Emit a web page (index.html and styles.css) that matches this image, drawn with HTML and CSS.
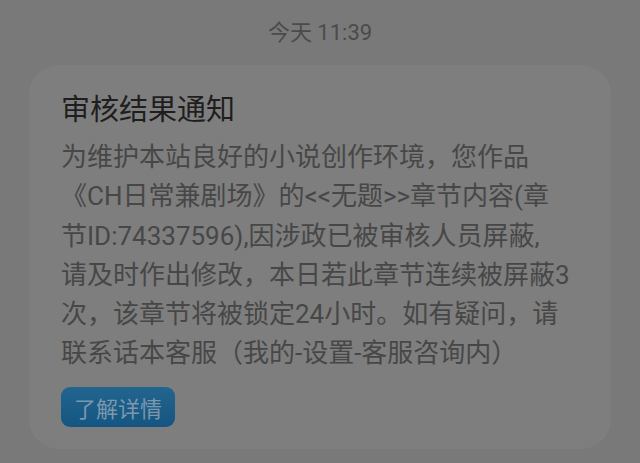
FILE: index.html
```html
<!DOCTYPE html>
<html>
<head>
    <title>审核结果通知</title>
    <link rel="stylesheet" href="styles.css">
</head>
<body>
    <div class="time">今天 11:39</div>

    <div class="card">
        <h1>审核结果通知</h1>
        <p class="content">
            为维护本站良好的小说创作环境，您作品<br>
            《CH日常兼剧场》的&lt;&lt;无题&gt;&gt;章节内容(章<br>
            节ID:74337596),因涉政已被审核人员屏蔽,<br>
            请及时作出修改，本日若此章节连续被屏蔽3<br>
            次，该章节将被锁定24小时。如有疑问，请<br>
            联系话本客服（我的-设置-客服咨询内）
        </p>
        <button class="more">了解详情</button>
    </div>
</body>
</html>
```

FILE: styles.css
```css
body {
    font-family: 'Roboto', 'Noto Sans CJK SC', sans-serif;
    background-color: #797979;
    margin: 0;
    padding: 0 29px;
    height: 463px;
    overflow: hidden;
}

.time {
    text-align: center;
    color: #4b4b4b;
    font-size: 22px;
    line-height: 26px;
    padding-top: 20px;
    margin-bottom: 19px;
}

.card {
    background-color: #7e7e7e;
    border-radius: 30px;
    padding: 25px 20px 22px 32px;
}

h1 {
    color: #1e1e1e;
    font-size: 29px;
    font-weight: normal;
    line-height: 40px;
    margin: 0 0 8px 0;
}

.content {
    color: #474747;
    font-size: 26px;
    line-height: 39.3px;
    margin: 0 0 13px 0;
    white-space: nowrap;
}

.more {
    background: linear-gradient(#22658f, #155581);
    color: #7b98ad;
    font-family: inherit;
    font-size: 22px;
    border: none;
    border-radius: 9px;
    padding: 0 13px;
    height: 40px;
}
```
